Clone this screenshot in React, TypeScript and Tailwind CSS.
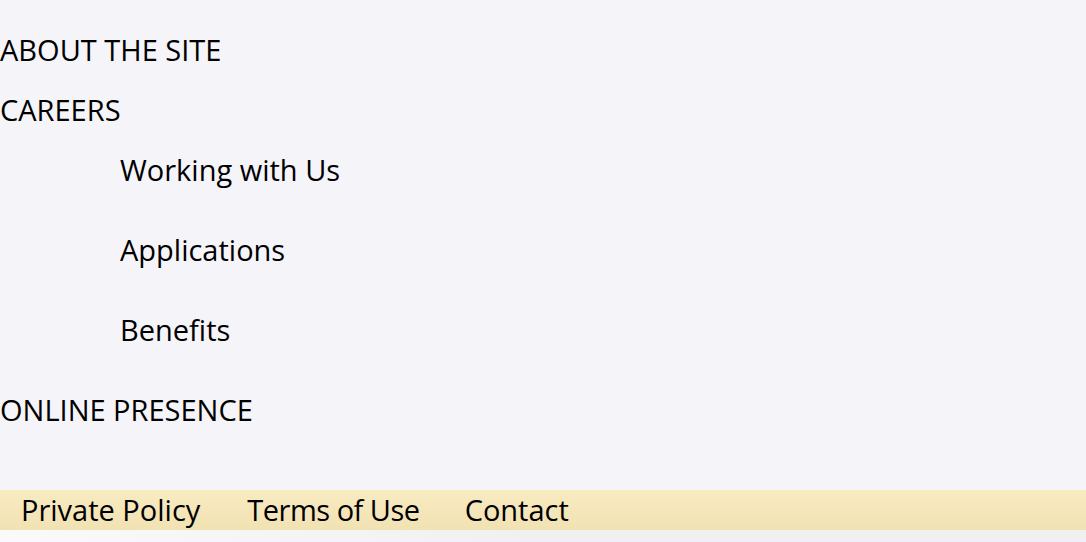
import React from "react";

const font = { fontFamily: "'Open Sans', 'Noto Sans', sans-serif" };

export default function App() {
  return (
    <div className="w-[1086px] h-[542px] bg-[#f5f4f9] flex flex-col text-black overflow-hidden" style={font}>
      <nav className="flex flex-col pt-[30px] text-[29px]">
        <div className="h-[40px] flex items-center">ABOUT THE SITE</div>
        <div className="h-[40px] flex items-center mt-[20px]">CAREERS</div>
        <div className="flex flex-col pl-[120px] mt-[20px] gap-[40px]">
          <div className="h-[40px] flex items-center">Working with Us</div>
          <div className="h-[40px] flex items-center">Applications</div>
          <div className="h-[40px] flex items-center">Benefits</div>
        </div>
        <div className="h-[40px] flex items-center mt-[40px]">ONLINE PRESENCE</div>
      </nav>
      <footer className="mt-[60px] h-[40px] flex items-center bg-gradient-to-b from-[#f9ebc1] to-[#f1e2b3] text-[29px] pl-[21px]">
        <a>Private Policy</a>
        <a className="ml-[47px] tracking-[-0.5px]">Terms of Use</a>
        <a className="ml-[45px]">Contact</a>
      </footer>
      <div className="flex-1 bg-gradient-to-r from-[#fafafa] via-[#f0f0f0] to-[#f0f0f0]" />
    </div>
  );
}
